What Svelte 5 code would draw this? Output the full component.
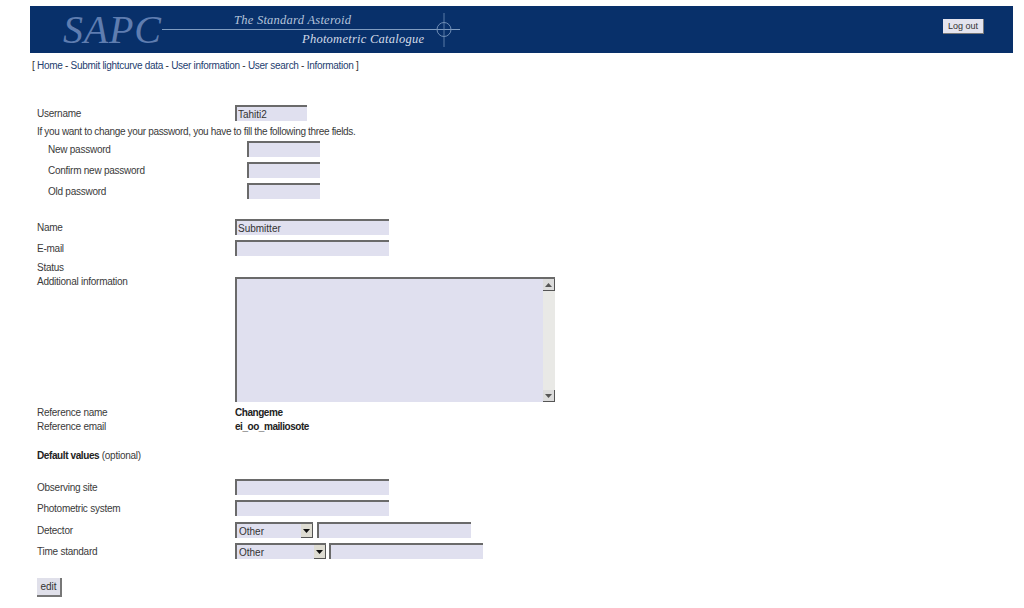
<script>
  const pw = ['New password', 'Confirm new password', 'Old password'];
  const links = ['Home', 'Submit lightcurve data', 'User information', 'User search', 'Information'];
</script>

<div class="page">
  <header class="banner">
    <div class="logo">
      <span class="sapc">SAPC</span>
      <div class="titles">
        <span class="t1">The Standard Asteroid</span>
        <span class="rule"></span>
        <span class="t2">Photometric Catalogue</span>
      </div>
      <svg class="cross" width="27" height="34" viewBox="0 0 27 34" aria-hidden="true">
        <circle cx="11" cy="16.5" r="7" fill="none" stroke="#6f8db5" stroke-width="1"/>
        <path d="M11 0V34" stroke="#6f8db5" stroke-width="1" opacity=".8"/>
      </svg>
    </div>
    <button class="logout" type="button">Log out</button>
  </header>

  <nav class="nav">[ {#each links as l, i}<a href="#top">{l}</a>{i < links.length - 1 ? ' - ' : ''}{/each} ]</nav>

  <form class="form">
    <div class="row"><label for="u">Username</label><input id="u" class="w72" value="Tahiti2" /></div>
    <p class="note">If you want to change your password, you have to fill the following three fields.</p>
    {#each pw as p}
      <div class="row field sub"><span class="lab">{p}</span><input class="w73" type="password" /></div>
    {/each}

    <div class="row field name"><span class="lab">Name</span><input class="w154" value="Submitter" /></div>
    <div class="row"><span class="lab">E-mail</span><input class="w154" /></div>
    <div class="status">Status</div>
    <div class="row addl">
      <span class="lab">Additional information</span>
      <div class="area">
        <textarea></textarea>
        <div class="sb">
          <span class="sbb"><svg width="7" height="4" viewBox="0 0 7 4"><path d="M3.5 0L7 4H0Z" fill="#555"/></svg></span>
          <span class="sbb"><svg width="7" height="4" viewBox="0 0 7 4"><path d="M0 0H7L3.5 4Z" fill="#555"/></svg></span>
        </div>
      </div>
    </div>

    <div class="row ref first"><span class="lab">Reference name</span><b>Changeme</b></div>
    <div class="row ref"><span class="lab">Reference email</span><b>ei_oo_mailiosote</b></div>

    <div class="defaults"><b>Default values</b> (optional)</div>

    <div class="row field"><span class="lab">Observing site</span><input class="w154" /></div>
    <div class="row field wide"><span class="lab">Photometric system</span><input class="w154" /></div>
    <div class="row field">
      <span class="lab">Detector</span>
      <div class="sel w78"><select><option>Other</option></select><span class="arrow"><svg width="7" height="4" viewBox="0 0 7 4"><path d="M0 0H7L3.5 4Z" fill="#111"/></svg></span></div>
      <input class="w154 gap4" />
    </div>
    <div class="row">
      <span class="lab">Time standard</span>
      <div class="sel w91"><select><option>Other</option></select><span class="arrow"><svg width="7" height="4" viewBox="0 0 7 4"><path d="M0 0H7L3.5 4Z" fill="#111"/></svg></span></div>
      <input class="w154 gap3" />
    </div>

    <button class="edit" type="button">edit</button>
  </form>
</div>

<style>
  :global(body) { margin: 0; background: #fff; }
  .page {
    width: 1024px; height: 608px; overflow: hidden; box-sizing: border-box; padding-top: 6px;
    font-family: "Liberation Sans", Arial, sans-serif; font-size: 10px; letter-spacing: -.25px; color: #3a3a3a;
  }
  .banner {
    margin-left: 30px; width: 983px; height: 47px; background: #08306a;
    display: flex; align-items: flex-start; justify-content: space-between;
  }
  .logo { position: relative; display: flex; width: 430px; height: 47px; }
  .sapc {
    font-family: "Liberation Serif", serif; font-style: italic; font-size: 40px; line-height: 47px;
    letter-spacing: .8px; color: #5f7db0; margin-left: 33px; width: 99px; flex: none;
  }
  .titles { position: relative; flex: 1; }
  .t1, .t2 {
    position: absolute; font-family: "Liberation Serif", serif; font-style: italic; color: #b4c3da;
    white-space: nowrap; letter-spacing: .25px;
  }
  .t1 { left: 72px; top: 7px; font-size: 12.5px; line-height: 15px; }
  .t2 { left: 140px; top: 25px; font-size: 12.5px; line-height: 16px; color: #d2dbe8; }
  .rule { position: absolute; left: 0; right: 0; top: 23px; height: 1px; background: #7f9cc0; }
  .cross { position: absolute; left: 403px; top: 7px; }
  .logout {
    margin: 13px 29px 0 0; width: 41px; height: 15px; padding: 0; border: 0;
    border-bottom: 1px solid #777; border-right: 1px solid #777;
    background: #e4e4ee; font: 9px "Liberation Sans", sans-serif; color: #333;
  }
  .nav { margin: 7px 0 0 32px; line-height: 12px; height: 12px; color: #333; white-space: nowrap; letter-spacing: -.29px; }
  .nav a { color: #24406f; text-decoration: none; }

  .form { margin: 33px 0 0 37px; }
  .row { display: flex; align-items: center; height: 16px; }
  .lab, .row label { width: 198px; flex: none; }
  .note { margin: 0; height: 20px; line-height: 22px; white-space: nowrap; letter-spacing: -.33px; }
  .field { margin-bottom: 5px; }
  .wide { margin-bottom: 6px; }
  .sub .lab { margin-left: 11px; width: 199px; }

  input, textarea, select {
    box-sizing: border-box; margin: 0; padding: 0 1px; height: 16px; background: #e0e0ef;
    border: 0; border-top: 2px solid #6a6a6a; border-left: 2px solid #6a6a6a;
    font: 10px "Liberation Sans", sans-serif; color: #333; border-radius: 0; outline: none;
  }
  .w72 { width: 72px; }
  .w73 { width: 73px; }
  .w154 { width: 154px; }
  .gap4 { margin-left: 4px; }
  .gap3 { margin-left: 3px; }
  .name { margin-top: 20px; }
  .status { height: 14px; line-height: 16px; margin-top: 4px; }
  .addl { align-items: flex-start; height: 125px; margin-top: 3px; }
  .addl .lab { line-height: 12px; margin-top: -1px; }
  .area { position: relative; width: 320px; height: 125px; }
  textarea { display: block; width: 320px; height: 125px; resize: none; }
  .sb {
    position: absolute; right: 0; top: 2px; bottom: 0; width: 12px; background: #e9e9e6;
    display: flex; flex-direction: column; justify-content: space-between;
  }
  .sbb {
    width: 12px; height: 12px; box-sizing: border-box; background: #dcdcdc; display: flex;
    align-items: center; justify-content: center; border-right: 1px solid #555; border-bottom: 1px solid #555;
  }
  .ref { height: 14px; }
  .ref b { color: #222; letter-spacing: -.45px; }
  .ref.first { margin-top: 3px; }
  .defaults { margin-top: 15px; height: 14px; line-height: 16px; margin-bottom: 17px; }
  .defaults b { color: #222; letter-spacing: -.4px; }
  .sel { position: relative; height: 16px; flex: none; }
  .w78 { width: 78px; }
  .w91 { width: 91px; }
  .sel select { appearance: none; width: 100%; padding-left: 2px; display: block; }
  .arrow {
    position: absolute; right: 0; top: 2px; width: 12px; height: 14px; box-sizing: border-box; background: #dedcd2;
    display: flex; align-items: center; justify-content: center;
    border-right: 1px solid #555; border-bottom: 1px solid #555;
  }
  .edit {
    display: block; margin-top: 19px; width: 25px; height: 19px; padding: 0; border: 0;
    border-right: 2px solid #777; border-bottom: 2px solid #777; background: #e0e0ea;
    font: 10px "Liberation Sans", sans-serif; color: #333;
  }
</style>
